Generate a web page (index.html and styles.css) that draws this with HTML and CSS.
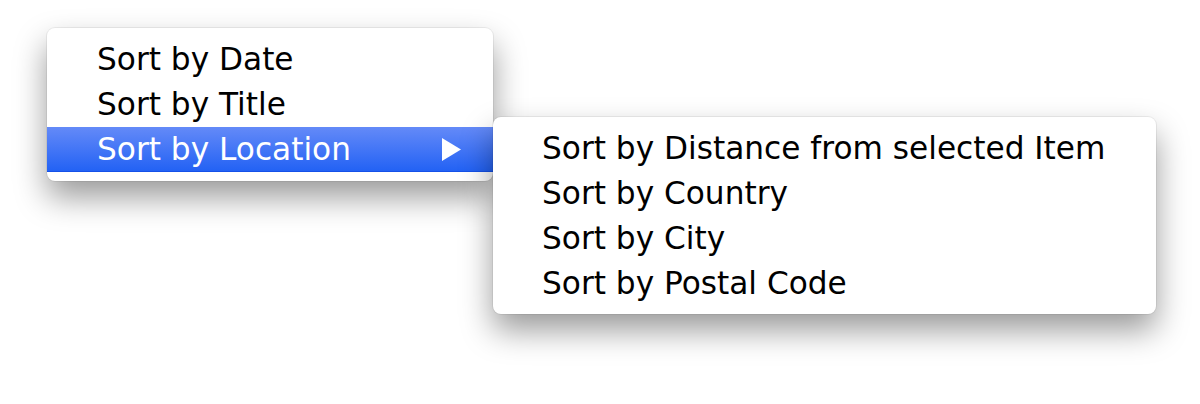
FILE: index.html
```html
<!DOCTYPE html>
<html lang="en">
<head>
    <meta charset="UTF-8">
    <title>Sort Menu</title>
    <link rel="stylesheet" href="styles.css">
</head>
<body>
    <div class="stage">
        <ul class="menu main-menu">
            <li class="menu-item">Sort by Date</li>
            <li class="menu-item">Sort by Title</li>
            <li class="menu-item selected">
                <span>Sort by Location</span>
                <svg class="arrow" width="20" height="23" viewBox="0 0 20 23">
                    <polygon points="0,0 19,11.5 0,23" fill="#fff"/>
                </svg>
            </li>
        </ul>
        <ul class="menu sub-menu">
            <li class="menu-item">Sort by Distance from selected Item</li>
            <li class="menu-item">Sort by Country</li>
            <li class="menu-item">Sort by City</li>
            <li class="menu-item">Sort by Postal Code</li>
        </ul>
    </div>
</body>
</html>
```

FILE: styles.css
```css
html, body {
    height: 100%;
}
body {
    margin: 0;
    min-height: 404px;
    background-color: #fff;
    font-family: 'DejaVu Sans', 'Liberation Sans', sans-serif;
    color: #000;
}
.stage {
    display: flex;
    align-items: flex-start;
    padding: 28px 0 0 47px;
}
.menu {
    list-style: none;
    margin: 0;
    padding: 9px 0 9px 0;
    background-color: #fff;
    border-radius: 8px;
    box-shadow: 0 0 0 1px rgba(0, 0, 0, 0.06), 0 16px 32px rgba(0, 0, 0, 0.4);
}
.main-menu {
    width: 446px;
}
.sub-menu {
    width: 663px;
    margin-top: 89px;
    padding-bottom: 8px;
    position: relative; /* stays above the main menu's shadow */
}
.menu-item {
    height: 45px;
    line-height: 45px;
    font-size: 31.2px;
    padding: 0 31px 0 50px;
    display: flex;
    justify-content: space-between;
    align-items: center;
    white-space: nowrap;
}
.sub-menu .menu-item {
    padding-left: 49px;
}
.selected {
    color: #fff;
    background: linear-gradient(#648af8, #2362f4);
    border-bottom: 1px solid #1551e8;
    height: 44px;
}
.arrow {
    display: block;
}
```
